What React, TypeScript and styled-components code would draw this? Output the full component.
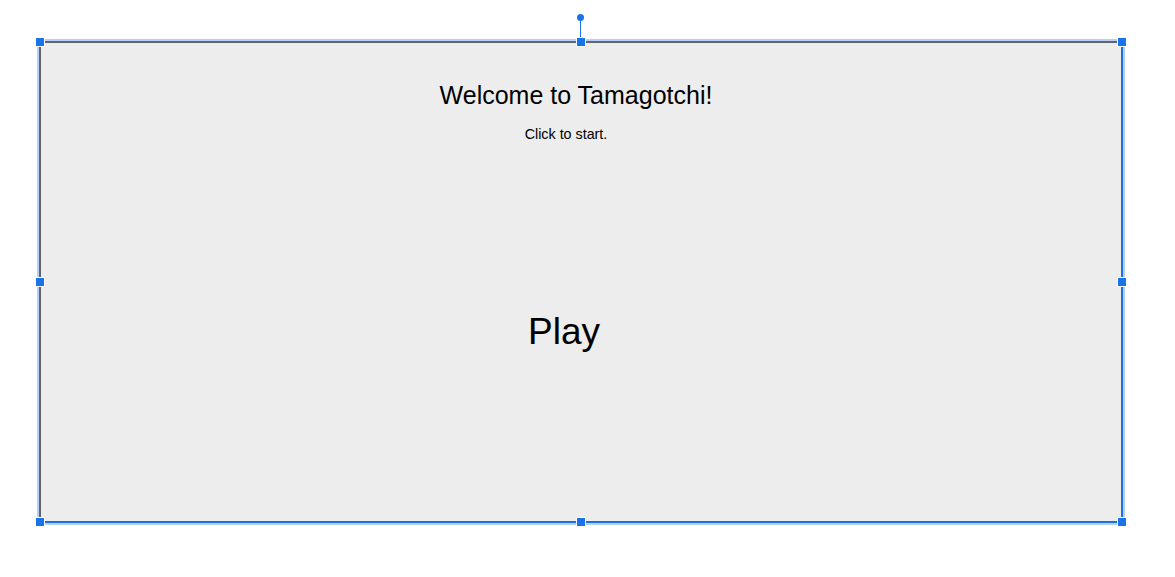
import React from "react";
import styled, { createGlobalStyle } from "styled-components";

const Global = createGlobalStyle`
  html, body { margin: 0; padding: 0; background: #ffffff; }
  body { font-family: "Liberation Sans", Arial, sans-serif; }
`;

const Page = styled.div`
  width: 1175px;
  height: 577px;
  box-sizing: border-box;
  padding: 42px 0 0 40px;
  background: #ffffff;
`;

const Frame = styled.div`
  position: relative;
  width: 1082px;
  height: 480px;
  box-sizing: border-box;
  border: 1px solid #5f6368;
  background: #ededed;
  box-shadow: 0 0 0 1px #1a73e8, 0 0 0 3px #b7d0f7;
  display: flex;
  flex-direction: column;
  align-items: center;
  padding-top: 38px;
  color: #000;
  cursor: pointer;
`;

const Title = styled.h1`
  margin: 0;
  font-size: 25px;
  font-weight: 400;
  line-height: normal;
  transform: translateX(-5px);
`;

const Hint = styled.p`
  margin: 16px 0 0;
  font-size: 14.3px;
  line-height: normal;
  transform: translateX(-15px);
`;

const PlayArea = styled.div`
  flex: 1;
  display: flex;
  align-items: center;
  justify-content: center;
  align-self: stretch;
`;

const PlayText = styled.span`
  font-size: 37px;
  line-height: normal;
  transform: translate(-17px, 0px);
`;

const Handle = styled.span<{ $x: string; $y: string }>`
  position: absolute;
  left: ${(p) => p.$x};
  top: ${(p) => p.$y};
  width: 8px;
  height: 8px;
  box-sizing: border-box;
  background: #1a73e8;
  outline: 1px solid #ffffff;
  transform: translate(-50%, -50%);
`;

const RotateStem = styled.span`
  position: absolute;
  left: 50%;
  top: -23px;
  width: 1px;
  height: 19px;
  background: #1a73e8;
  transform: translateX(-1px);
`;

const RotateKnob = styled.span`
  position: absolute;
  left: 50%;
  top: -29px;
  width: 7px;
  height: 7px;
  border-radius: 50%;
  background: #1a73e8;
  transform: translateX(-4px);
`;

const handles: [string, string][] = [
  ["-1px", "-1px"],
  ["50%", "-1px"],
  ["calc(100% + 1px)", "-1px"],
  ["-1px", "50%"],
  ["calc(100% + 1px)", "50%"],
  ["-1px", "calc(100% + 1px)"],
  ["50%", "calc(100% + 1px)"],
  ["calc(100% + 1px)", "calc(100% + 1px)"],
];

export default function App() {
  return (
    <>
      <Global />
      <Page>
        <Frame>
          <Title>Welcome to Tamagotchi!</Title>
          <Hint>Click to start.</Hint>
          <PlayArea>
            <PlayText>Play</PlayText>
          </PlayArea>
          <RotateStem />
          <RotateKnob />
          {handles.map(([x, y], i) => (
            <Handle key={i} $x={x} $y={y} />
          ))}
        </Frame>
      </Page>
    </>
  );
}
